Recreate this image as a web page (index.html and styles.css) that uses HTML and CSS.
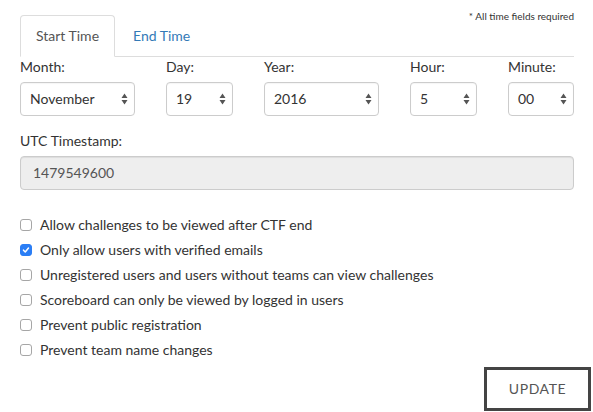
FILE: index.html
```html
<!DOCTYPE html>
<html lang="en">
<head>
<meta charset="utf-8">
<title>CTF Settings</title>
<link rel="stylesheet" href="styles.css">
</head>
<body>
<div class="page">
  <div class="content">
    <div class="tabs-head">
      <ul class="tabs">
        <li class="tab active"><a>Start Time</a></li>
        <li class="tab"><a>End Time</a></li>
      </ul>
      <div class="note">* All time fields required</div>
    </div>

    <div class="time-grid">
      <div class="field">
        <label class="lbl">Month:</label>
        <div class="select"><span>November</span><svg class="arrows" width="7" height="12" viewBox="0 0 7 12"><path d="M3.5 0.5 L6.5 5 L0.5 5 Z M0.5 7 L6.5 7 L3.5 11.5 Z" fill="#555"/></svg></div>
      </div>
      <div class="field">
        <label class="lbl">Day:</label>
        <div class="select"><span>19</span><svg class="arrows" width="7" height="12" viewBox="0 0 7 12"><path d="M3.5 0.5 L6.5 5 L0.5 5 Z M0.5 7 L6.5 7 L3.5 11.5 Z" fill="#555"/></svg></div>
      </div>
      <div class="field">
        <label class="lbl">Year:</label>
        <div class="select"><span>2016</span><svg class="arrows" width="7" height="12" viewBox="0 0 7 12"><path d="M3.5 0.5 L6.5 5 L0.5 5 Z M0.5 7 L6.5 7 L3.5 11.5 Z" fill="#555"/></svg></div>
      </div>
      <div class="field">
        <label class="lbl">Hour:</label>
        <div class="select"><span>5</span><svg class="arrows" width="7" height="12" viewBox="0 0 7 12"><path d="M3.5 0.5 L6.5 5 L0.5 5 Z M0.5 7 L6.5 7 L3.5 11.5 Z" fill="#555"/></svg></div>
      </div>
      <div class="field">
        <label class="lbl">Minute:</label>
        <div class="select"><span>00</span><svg class="arrows" width="7" height="12" viewBox="0 0 7 12"><path d="M3.5 0.5 L6.5 5 L0.5 5 Z M0.5 7 L6.5 7 L3.5 11.5 Z" fill="#555"/></svg></div>
      </div>
    </div>

    <div class="ts-group">
      <label class="lbl">UTC Timestamp:</label>
      <div class="ts-input">1479549600</div>
    </div>

    <div class="checks">
      <div class="check"><span class="box"></span><span>Allow challenges to be viewed after CTF end</span></div>
      <div class="check"><span class="box checked"><svg width="12" height="12" viewBox="0 0 12 12"><path d="M3 6.2 L5.1 8.4 L9 3.6" fill="none" stroke="#fff" stroke-width="1.8" stroke-linecap="round" stroke-linejoin="round"/></svg></span><span>Only allow users with verified emails</span></div>
      <div class="check"><span class="box"></span><span>Unregistered users and users without teams can view challenges</span></div>
      <div class="check"><span class="box"></span><span>Scoreboard can only be viewed by logged in users</span></div>
      <div class="check"><span class="box"></span><span>Prevent public registration</span></div>
      <div class="check"><span class="box"></span><span>Prevent team name changes</span></div>
    </div>
  </div>
  <div class="actions">
    <button class="update">UPDATE</button>
  </div>
</div>
</body>
</html>
```

FILE: styles.css
```css
* { box-sizing: border-box; }

html, body {
  margin: 0;
  padding: 0;
  background: #fff;
}

body {
  font-family: Lato, "Open Sans", "Liberation Sans", sans-serif;
  font-size: 14px;
  line-height: 20px;
  color: #333;
  width: 593px;
  height: 412px;
  overflow: hidden;
}

.page {
  padding-top: 10px;
}

.content {
  margin-left: 20px;
  width: 554px;
}

.tabs-head {
  display: flex;
  align-items: flex-start;
  border-bottom: 1px solid #ddd;
}

.tabs {
  display: flex;
  list-style: none;
  margin: 5px 0 0 0;
  padding: 0;
}

.tab {
  margin-right: 2px;
  margin-bottom: -1px;
}

.tab a {
  display: block;
  padding: 10px 15px;
  border: 1px solid transparent;
  border-radius: 4px 4px 0 0;
  color: #337ab7;
  line-height: 20px;
}

.tab.active a {
  color: #555;
  background: #fff;
  border-color: #ddd #ddd transparent #ddd;
}

.note {
  margin-left: auto;
  font-size: 10px;
  line-height: 12px;
  color: #333;
}

.time-grid {
  display: grid;
  grid-template-columns: 115px 67px 115px 67px 1fr;
  column-gap: 31px;
}

.lbl {
  display: block;
  margin-bottom: 5px;
  color: #333;
}

.select {
  position: relative;
  display: flex;
  align-items: center;
  justify-content: space-between;
  height: 34px;
  padding: 0 6px 0 9px;
  border: 1px solid #ccc;
  border-radius: 4px;
  background: #fff;
  color: #333;
  box-shadow: inset 0 1px 1px rgba(0,0,0,0.04);
}

.ts-group {
  margin-top: 15px;
}

.ts-input {
  height: 34px;
  padding: 6px 12px;
  border: 1px solid #ccc;
  border-radius: 4px;
  background: #eee;
  color: #555;
  line-height: 20px;
  box-shadow: inset 0 1px 1px rgba(0,0,0,0.075);
}

.checks {
  margin-top: 25px;
  display: flex;
  flex-direction: column;
  gap: 5px;
}

.check {
  display: flex;
  align-items: center;
  gap: 8px;
  line-height: 20px;
}

.box {
  display: flex;
  align-items: center;
  justify-content: center;
  width: 12px;
  height: 12px;
  border: 1px solid #a6a6a6;
  border-radius: 3px;
  background: #fff;
  flex: none;
}

.box.checked {
  background: #2b7ef5;
  border-color: #2b7ef5;
}

.box svg { display: block; }

.actions {
  display: flex;
  justify-content: flex-end;
  padding-right: 2px;
  margin-top: 7px;
}

.update {
  width: 107px;
  height: 44px;
  padding: 0;
  border: 3px solid #444;
  background: #fff;
  color: #555;
  font-family: Lato, "Open Sans", "Liberation Sans", sans-serif;
  font-size: 14px;
  letter-spacing: 0.6px;
  line-height: 20px;
  text-align: center;
}
```
